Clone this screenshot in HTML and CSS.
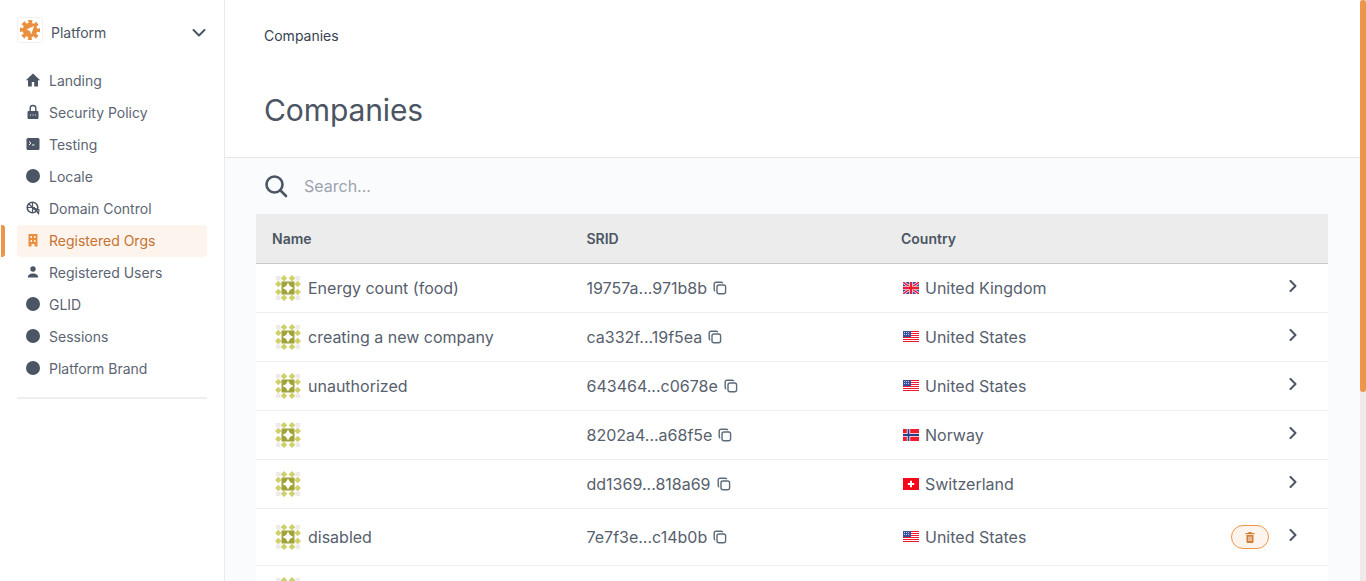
FILE: index.html
```html
<!DOCTYPE html>
<html lang="en">
<head>
    <meta charset="UTF-8">
    <meta name="viewport" content="width=device-width, initial-scale=1.0">
    <title>Companies</title>
    <link rel="stylesheet" href="styles.css">
</head>
<body>
    <svg class="defs" width="0" height="0" aria-hidden="true">
        <symbol id="identicon" viewBox="0 0 26 26">
            <g fill="#efe9ec">
                <rect x="1" y="1" width="4.500" height="4.500"/>
                <rect x="20.500" y="1" width="4.500" height="4.500"/>
                <rect x="1" y="20.500" width="4.500" height="4.500"/>
                <rect x="20.500" y="20.500" width="4.500" height="4.500"/>
            </g>
            <g fill="#cdd16c">
                <path d="M9 0l3.300 3.300L9 6.600 5.700 3.300zM17 0l3.300 3.300L17 6.600l-3.300-3.300z"/>
                <path d="M9 19.400l3.300 3.300L9 26l-3.300-3.300zM17 19.400l3.300 3.300L17 26l-3.300-3.300z"/>
                <path d="M3.300 5.700L6.600 9l-3.300 3.300L0 9zM3.300 13.700L6.600 17l-3.300 3.300L0 17z"/>
                <path d="M22.700 5.700L26 9l-3.300 3.300L19.400 9zM22.700 13.700L26 17l-3.300 3.300L19.400 17z"/>
            </g>
            <rect x="6.500" y="6.500" width="13" height="13" fill="#a2a23b"/>
            <path d="M13 7.500l1.900 3.600 3.600 1.900-3.600 1.900-1.900 3.600-1.900-3.600L7.500 13l3.600-1.900z" fill="#fff"/>
        </symbol>
        <symbol id="copy" viewBox="0 0 14 14">
            <rect x="4" y="4" width="8.600" height="8.800" rx="2" fill="none" stroke="#5b6b78" stroke-width="1.400"/>
            <path d="M9.800 2.200A1.600 1.600 0 0 0 8.400 1.200H3a1.800 1.800 0 0 0-1.800 1.800v5.600a1.700 1.700 0 0 0 1 1.500" fill="none" stroke="#5b6b78" stroke-width="1.400"/>
        </symbol>
        <symbol id="chevron" viewBox="0 0 12 12">
            <path d="M3.500 1l5 5-5 5" fill="none" stroke="#4b5563" stroke-width="2" stroke-linecap="round" stroke-linejoin="round"/>
        </symbol>
        <symbol id="flag-uk" viewBox="0 0 16 12">
            <rect width="16" height="12" fill="#3a50b0"/>
            <path d="M0 0l16 12M16 0L0 12" stroke="#fff" stroke-width="2.800"/>
            <path d="M0 0l16 12M16 0L0 12" stroke="#ee1c32" stroke-width="1.500"/>
            <path d="M8 0v12M0 6h16" stroke="#fff" stroke-width="3.600"/>
            <path d="M8 0v12M0 6h16" stroke="#ee1c32" stroke-width="2.400"/>
        </symbol>
        <symbol id="flag-us" viewBox="0 0 16 12">
            <rect width="16" height="12" fill="#fff"/>
            <path d="M0 .5h16M0 2.500h16M0 4.500h16M0 6.500h16M0 8.500h16M0 10.500h16" stroke="#f0182e" stroke-width="1"/>
            <rect width="8" height="6" fill="#3c4f9a"/>
            <path d="M1 1.500h6M1 3.500h6" stroke="#c4cbe6" stroke-width="1" stroke-dasharray="1 1"/>
        </symbol>
        <symbol id="flag-no" viewBox="0 0 16 12">
            <rect width="16" height="12" fill="#ef1c2e"/>
            <path d="M5.500 0v12M0 6h16" stroke="#fff" stroke-width="3.400"/>
            <path d="M5.500 0v12M0 6h16" stroke="#2b3f8f" stroke-width="1.800"/>
        </symbol>
        <symbol id="flag-ch" viewBox="0 0 16 12">
            <rect width="16" height="12" fill="#f5071c"/>
            <path d="M8 2.800v6.400M4.800 6h6.400" stroke="#fff" stroke-width="2"/>
        </symbol>
    </svg>

    <div class="app">
        <aside class="sidebar">
            <div class="brand">
                <span class="brand-logo">
                    <svg viewBox="0 0 24 24" width="22" height="22">
                        <circle cx="12" cy="12" r="9" fill="none" stroke="#ea8f3e" stroke-width="4" stroke-dasharray="4 3.070" stroke-dashoffset="2"/>
                        <circle cx="12" cy="12" r="8" fill="#ea8f3e"/>
                        <path fill="#fff" d="M16.500 7.500l-3.200 9-1.500-3.400L8 11.500z"/>
                    </svg>
                </span>
                <span class="brand-name">Platform</span>
                <svg class="brand-caret" viewBox="0 0 14 14" width="14" height="14">
                    <path d="M1.500 4l5.500 5.500L12.500 4" fill="none" stroke="#4b5563" stroke-width="2" stroke-linecap="round" stroke-linejoin="round"/>
                </svg>
            </div>

            <nav class="nav">
                <a class="nav-item">
                    <svg class="nav-icon" viewBox="0 0 16 16"><path d="M8 1.500L.8 8.300H3v6.200h3.800V10h2.400v4.500H13V8.300h2.200z"/></svg>
                    Landing
                </a>
                <a class="nav-item">
                    <svg class="nav-icon" viewBox="0 0 16 16"><path fill-rule="evenodd" d="M3.500 7h9a1 1 0 0 1 1 1v6a1 1 0 0 1-1 1h-9a1 1 0 0 1-1-1V8a1 1 0 0 1 1-1zM5 10.500v1h1v-1zM7.500 10.500v1h1v-1zM10 10.500v1h1v-1z"/><path d="M5.200 7V4.300a2.800 2.800 0 0 1 5.600 0V7" fill="none" stroke="#4b5563" stroke-width="1.400"/></svg>
                    Security Policy
                </a>
                <a class="nav-item">
                    <svg class="nav-icon" viewBox="0 0 16 16"><rect x="1.500" y="2" width="13" height="12" rx="1.500"/><path d="M4 5.500L6 7.200 4 9M7 9h2.500" fill="none" stroke="#fff" stroke-width="1"/></svg>
                    Testing
                </a>
                <a class="nav-item">
                    <svg class="nav-icon" viewBox="0 0 16 16"><circle cx="8" cy="8" r="7"/></svg>
                    Locale
                </a>
                <a class="nav-item">
                    <svg class="nav-icon" viewBox="0 0 16 16"><circle cx="7.500" cy="7.500" r="5.300" fill="none" stroke="#4b5563" stroke-width="1.600"/><path d="M7.500 2v11M2 7.500h8M4 4l6 6M9 8l4.500 5.500L14 10z" fill="none" stroke="#4b5563" stroke-width="1.200"/></svg>
                    Domain Control
                </a>
                <a class="nav-item active">
                    <svg class="nav-icon" viewBox="0 0 16 16"><path fill-rule="evenodd" fill="#ea8f3e" d="M3.500 2h9v12.500H9.500V12h-3v2.500h-3zM5.500 4v2h1.500V4zM9 4v2h1.500V4zM5.500 8v2h1.500V8zM9 8v2h1.500V8z"/></svg>
                    Registered Orgs
                </a>
                <a class="nav-item">
                    <svg class="nav-icon" viewBox="0 0 16 16"><circle cx="8" cy="5" r="2.700"/><path d="M2.800 13.500c0-2.600 2.400-4 5.200-4s5.200 1.400 5.200 4z"/></svg>
                    Registered Users
                </a>
                <a class="nav-item">
                    <svg class="nav-icon" viewBox="0 0 16 16"><circle cx="8" cy="8" r="7"/></svg>
                    GLID
                </a>
                <a class="nav-item">
                    <svg class="nav-icon" viewBox="0 0 16 16"><circle cx="8" cy="8" r="7"/></svg>
                    Sessions
                </a>
                <a class="nav-item">
                    <svg class="nav-icon" viewBox="0 0 16 16"><circle cx="8" cy="8" r="7"/></svg>
                    Platform Brand
                </a>
            </nav>
            <div class="nav-divider"></div>
        </aside>

        <main class="main">
            <header class="page-header">
                <div class="breadcrumb">Companies</div>
                <h1 class="page-title">Companies</h1>
            </header>

            <div class="search">
                <svg viewBox="0 0 24 24" width="24" height="24">
                    <circle cx="10.500" cy="10.500" r="8" fill="none" stroke="#4b5563" stroke-width="2.600"/>
                    <path d="M16.500 16.500L22 22" stroke="#4b5563" stroke-width="2.600" stroke-linecap="round"/>
                </svg>
                <input class="search-input" type="text" placeholder="Search...">
            </div>

            <div class="list">
                <div class="row row-head">
                    <div>Name</div>
                    <div>SRID</div>
                    <div>Country</div>
                </div>

                <div class="row">
                    <div class="cell-name"><svg class="identicon"><use href="#identicon"/></svg>Energy count (food)</div>
                    <div class="cell-srid">19757a...971b8b <svg class="copy"><use href="#copy"/></svg></div>
                    <div class="cell-country"><svg class="flag"><use href="#flag-uk"/></svg>United Kingdom</div>
                    <div class="cell-actions"><svg class="chevron"><use href="#chevron"/></svg></div>
                </div>
                <div class="row">
                    <div class="cell-name"><svg class="identicon"><use href="#identicon"/></svg>creating a new company</div>
                    <div class="cell-srid">ca332f...19f5ea <svg class="copy"><use href="#copy"/></svg></div>
                    <div class="cell-country"><svg class="flag"><use href="#flag-us"/></svg>United States</div>
                    <div class="cell-actions"><svg class="chevron"><use href="#chevron"/></svg></div>
                </div>
                <div class="row">
                    <div class="cell-name"><svg class="identicon"><use href="#identicon"/></svg>unauthorized</div>
                    <div class="cell-srid">643464...c0678e <svg class="copy"><use href="#copy"/></svg></div>
                    <div class="cell-country"><svg class="flag"><use href="#flag-us"/></svg>United States</div>
                    <div class="cell-actions"><svg class="chevron"><use href="#chevron"/></svg></div>
                </div>
                <div class="row">
                    <div class="cell-name"><svg class="identicon"><use href="#identicon"/></svg></div>
                    <div class="cell-srid">8202a4...a68f5e <svg class="copy"><use href="#copy"/></svg></div>
                    <div class="cell-country"><svg class="flag"><use href="#flag-no"/></svg>Norway</div>
                    <div class="cell-actions"><svg class="chevron"><use href="#chevron"/></svg></div>
                </div>
                <div class="row">
                    <div class="cell-name"><svg class="identicon"><use href="#identicon"/></svg></div>
                    <div class="cell-srid">dd1369...818a69 <svg class="copy"><use href="#copy"/></svg></div>
                    <div class="cell-country"><svg class="flag"><use href="#flag-ch"/></svg>Switzerland</div>
                    <div class="cell-actions"><svg class="chevron"><use href="#chevron"/></svg></div>
                </div>
                <div class="row row-tall">
                    <div class="cell-name"><svg class="identicon"><use href="#identicon"/></svg>disabled</div>
                    <div class="cell-srid">7e7f3e...c14b0b <svg class="copy"><use href="#copy"/></svg></div>
                    <div class="cell-country"><svg class="flag"><use href="#flag-us"/></svg>United States</div>
                    <div class="cell-actions">
                        <button class="delete-btn" type="button">
                            <svg viewBox="0 0 12 12" width="12" height="12"><path fill="#d27f38" d="M4.500 1h3l.5 1h2.500v1.300h-9V2H4zM2.500 4h7v7a1 1 0 0 1-1 1h-5a1 1 0 0 1-1-1zM4.500 5.500v4.500h1V5.500zM6.500 5.500v4.500h1V5.500z" fill-rule="evenodd"/></svg>
                        </button>
                        <svg class="chevron"><use href="#chevron"/></svg>
                    </div>
                </div>
                <div class="row">
                    <div class="cell-name"><svg class="identicon"><use href="#identicon"/></svg></div>
                </div>
            </div>
        </main>

        <div class="scrollbar"><div class="scrollbar-thumb"></div></div>
    </div>
</body>
</html>
```

FILE: styles.css
```css
* {
    box-sizing: border-box;
}
html, body {
    height: 100%;
    margin: 0;
    overflow: hidden;
}
body {
    font-family: Inter, "Liberation Sans", sans-serif;
    color: #4b5563;
    background-color: #fafbfd;
}
.defs {
    position: absolute;
}
.app {
    display: flex;
    height: 100vh;
}

/* sidebar */
.sidebar {
    width: 225px;
    flex-shrink: 0;
    padding: 17px 17px 0;
    background-color: white;
    border-right: 1px solid #e9eaec;
}
.brand {
    display: flex;
    align-items: center;
    height: 26px;
    font-size: 14px;
}
.brand-logo {
    display: flex;
    align-items: center;
    justify-content: center;
    width: 26px;
    height: 26px;
    border: 1px solid #f1f1f1;
    border-radius: 2px;
}
.brand-name {
    margin-left: 8px;
    margin-top: 5px;
    flex: 1;
}
.brand-caret {
    margin-right: 1px;
    margin-top: 5px;
}
.nav {
    margin-top: 22px;
}
.nav-item {
    position: relative;
    display: flex;
    align-items: center;
    gap: 8px;
    height: 32px;
    padding-left: 8px;
    padding-bottom: 2px;
    font-size: 14px;
    color: #5c6573;
    border-radius: 4px;
}
.nav-icon {
    width: 16px;
    height: 16px;
    flex-shrink: 0;
    fill: #4b5563;
}
.nav-item.active {
    color: #c7722f;
    background-color: #fdf4ee;
}
.nav-item.active::before {
    content: "";
    position: absolute;
    left: -16px;
    top: 0;
    width: 4px;
    height: 32px;
    background-color: #ed9549;
    border-radius: 0 3px 3px 0;
}
.nav-divider {
    height: 2px;
    margin-top: 12px;
    background-color: #eeeff0;
}

/* main */
.main {
    flex: 1;
    min-width: 0;
    overflow: hidden;
}
.page-header {
    height: 158px;
    padding: 27px 39px 0;
    background-color: white;
    border-bottom: 1px solid #e5e7eb;
}
.breadcrumb {
    font-size: 14px;
    line-height: 17px;
    color: #374151;
}
.page-title {
    margin: 48px 0 0;
    font-size: 30px;
    line-height: 36px;
    font-weight: 400;
    color: #4b5563;
    letter-spacing: -0.1px;
}
.search {
    display: flex;
    align-items: center;
    height: 56px;
    padding-left: 39px;
}
.search-input {
    margin-left: 16px;
    flex: 1;
    border: none;
    outline: none;
    padding: 0;
    font-family: inherit;
    font-size: 16px;
    color: #4b5563;
    background: transparent;
}
.search-input::placeholder {
    color: #9ca3af;
}

/* company list */
.list {
    margin: 0 32px 0 31px;
    background-color: white;
}
.row {
    display: grid;
    grid-template-columns: 314.5px 314.5px 1fr 120px;
    align-items: center;
    height: 49px;
    padding-left: 16px;
    font-size: 16px;
    color: #57606d;
    border-bottom: 1px solid #eeeef0;
}
.row-head {
    grid-template-columns: 314.5px 314.5px 1fr;
    height: 50px;
    font-size: 14px;
    font-weight: 600;
    color: #4b5563;
    background-color: #ececec;
    border-bottom-color: #c9c9cd;
}
.row-tall {
    height: 57px;
}
.cell-name,
.cell-srid,
.cell-country {
    display: flex;
    align-items: center;
}
.cell-srid {
    gap: 6px;
}
.identicon {
    width: 26px;
    height: 26px;
    margin-left: 3px;
    margin-right: 7px;
}
.copy {
    width: 14px;
    height: 14px;
}
.flag {
    width: 16px;
    height: 12px;
    margin-left: 2px;
    margin-right: 6px;
}
.cell-actions {
    display: flex;
    align-items: center;
    justify-content: flex-end;
    gap: 18px;
    padding-right: 29px;
    margin-top: -4px;
}
.chevron {
    width: 12px;
    height: 12px;
}
.delete-btn {
    display: flex;
    align-items: center;
    justify-content: center;
    width: 38px;
    height: 24px;
    padding: 0;
    margin-top: 4px;
    background-color: #fdf4ee;
    border: 1px solid #ed9549;
    border-radius: 12px;
    cursor: pointer;
}

/* scrollbar */
.scrollbar {
    width: 6px;
    flex-shrink: 0;
    background-color: #f0eaeb;
}
.scrollbar-thumb {
    height: 392px;
    background-color: #ed9549;
    border-radius: 3px;
}
```
